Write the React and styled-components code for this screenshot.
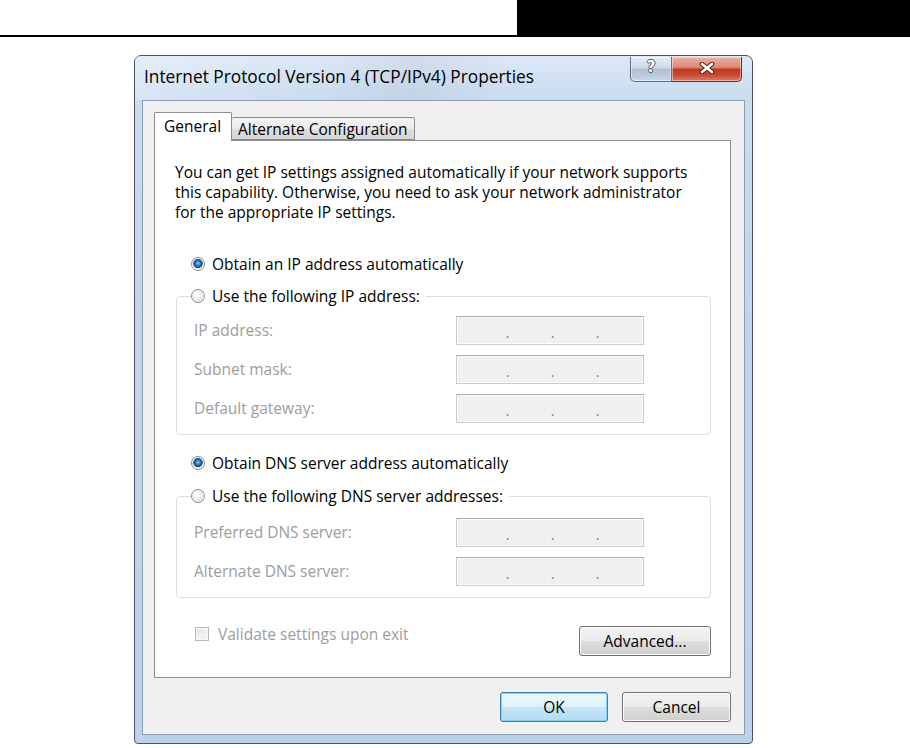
import React from "react";
import styled, { createGlobalStyle } from "styled-components";

const Global = createGlobalStyle`
  html, body { margin: 0; padding: 0; background: #fff; }
  body { font-family: "Open Sans", "Noto Sans", sans-serif; color: #000; }
  * { box-sizing: border-box; }
`;

const Page = styled.div`
  width: 910px;
  height: 748px;
  overflow: hidden;
  background: #fff;
`;

const Header = styled.div`
  display: flex;
  height: 37px;
`;

const HeaderLeft = styled.div`
  flex: 0 0 517px;
  border-bottom: 2px solid #000;
`;

const HeaderRight = styled.div`
  flex: 1;
  background: #000;
`;

const Window = styled.div`
  margin: 18px 0 0 134px;
  width: 619px;
  border: 1px solid #4a5260;
  border-radius: 7px 7px 4px 4px;
  background: linear-gradient(180deg, #dce8f6 0%, #cadcf0 6%, #c0d4ec 40%, #bcd2ec 100%);
  display: flex;
  flex-direction: column;
`;

const TitleBar = styled.div`
  height: 44px;
  display: flex;
  align-items: flex-start;
  padding: 0 10px 0 9px;
  background: linear-gradient(100deg, rgba(255,255,255,0.25) 0%, rgba(255,255,255,0) 30%, rgba(160,170,185,0.18) 45%, rgba(255,255,255,0) 60%);
`;

const TitleText = styled.div`
  flex: 1;
  margin-top: 10px;
  font-size: 17.3px;
  line-height: 22px;
  color: #000;
  white-space: nowrap;
`;

const CaptionButtons = styled.div`
  display: flex;
  margin-top: 1px;
`;

const CaptionButton = styled.div`
  width: ${(p) => p.$w}px;
  height: 25px;
  display: flex;
  align-items: center;
  justify-content: center;
  border: 1px solid ${(p) => (p.$close ? "#6b2e25" : "#5f6d80")};
  border-top: none;
  border-radius: ${(p) => (p.$close ? "0 0 5px 0" : "0 0 0 5px")};
  border-left-width: ${(p) => (p.$close ? 0 : 1)}px;
  background: ${(p) =>
    p.$close
      ? "linear-gradient(180deg, #eab0a4 0%, #dc8a77 42%, #c3381d 52%, #c84a32 75%, #dd7d66 100%)"
      : "linear-gradient(180deg, #e6edf6 0%, #cdd9e7 45%, #b0c0d4 52%, #bccbdd 80%, #cbdaeb 100%)"};
  box-shadow: inset 0 0 0 1px rgba(255,255,255,0.45);
  padding-bottom: 3px;
`;

const HelpGlyph = styled.span`
  font-family: "DejaVu Sans", sans-serif;
  font-weight: bold;
  font-size: 15px;
  line-height: 15px;
  color: #fff;
  text-shadow: -1px 0 #4a5868, 1px 0 #4a5868, 0 -1px #4a5868, 0 1px #4a5868;
`;

const Client = styled.div`
  margin: 0 7px 8px 7px;
  border: 1px solid #8e9cae;
  background: #f0f0f0;
  padding: 11px 13px 12px 11px;
  display: flex;
  flex-direction: column;
`;

const TabRow = styled.div`
  display: flex;
  align-items: flex-end;
  height: 28px;
  position: relative;
  z-index: 1;
`;

const Tab = styled.div`
  height: ${(p) => (p.$active ? 29 : 23)}px;
  margin-bottom: ${(p) => (p.$active ? -1 : 0)}px;
  padding: ${(p) => (p.$active ? "3px 10px 0 9px" : "1px 6px 0 6px")};
  font-size: 15.5px;
  line-height: 20px;
  border: 1px solid #898c95;
  border-bottom: ${(p) => (p.$active ? "none" : "1px solid #898c95")};
  border-left-width: ${(p) => (p.$active ? 1 : 0)}px;
  border-radius: 2px 2px 0 0;
  background: ${(p) =>
    p.$active ? "#fff" : "linear-gradient(180deg, #f3f3f3 0%, #ebebeb 50%, #dedede 51%, #d6d6d6 100%)"};
  white-space: nowrap;
`;

const Panel = styled.div`
  background: #fff;
  border: 1px solid #898c95;
  padding: 21px 19px 21px 20px;
  display: flex;
  flex-direction: column;
`;

const Intro = styled.p`
  margin: 0;
  font-size: 15.5px;
  line-height: 20px;
  white-space: nowrap;
`;

const RadioRow = styled.label`
  display: flex;
  align-items: center;
  gap: 7px;
  height: 20px;
  margin: ${(p) => p.$m || "0"};
  padding-left: 16px;
  font-size: 15.5px;
  white-space: nowrap;
`;

const RadioDot = styled.span`
  flex: 0 0 14px;
  width: 14px;
  height: 14px;
  border-radius: 50%;
  border: 1px solid #8f8f8f;
  background: ${(p) =>
    p.$checked
      ? "radial-gradient(circle at 50% 45%, #8fd0f6 0%, #2a8ad4 22%, #1a5aa0 40%, #2b3f55 50%, #e2e2e2 56%, #f6f6f6 100%)"
      : "radial-gradient(circle at 40% 35%, #ffffff 0%, #f0f0f0 40%, #d4d4d4 100%)"};
  box-shadow: inset 0 0 0 1px #f4f4f4;
`;

const Group = styled.fieldset`
  margin: ${(p) => p.$m};
  margin-left: 1px;
  width: 535px;
  border: 1px solid #d5dfe5;
  border-radius: 4px;
  padding: ${(p) => p.$pt}px 0 ${(p) => p.$pb}px 14px;
  min-width: 0;
`;

const Legend = styled.legend`
  padding: 0 6px 0 0;
  margin: 0;
  display: flex;
  align-items: center;
  gap: 7px;
  height: 20px;
  font-size: 15.5px;
  white-space: nowrap;
`;

const FieldGrid = styled.div`
  display: grid;
  grid-template-columns: 262px 188px;
  row-gap: 10px;
  padding-left: 3px;
`;

const FieldLabel = styled.div`
  font-size: 15.5px;
  line-height: 29px;
  color: #9d9d9d;
  white-space: nowrap;
`;

const IpBox = styled.div`
  height: 29px;
  border: 1px solid #c9cbcd;
  border-top-color: #a9abae;
  background: #f0f0f0;
  box-shadow: inset 0 0 0 1px #fbfbfb;
  display: flex;
  padding-left: 28px;
`;

const IpDot = styled.span`
  width: 45px;
  text-align: center;
  font-size: 14px;
  line-height: 31px;
  color: #7d7591;
`;

const BottomRow = styled.div`
  display: flex;
  justify-content: space-between;
  align-items: flex-start;
  margin-top: 28px;
  width: 536px;
`;

const CheckRow = styled.label`
  display: flex;
  align-items: center;
  gap: 9px;
  margin-left: 20px;
  font-size: 15.5px;
  line-height: 16px;
  color: #9d9d9d;
  white-space: nowrap;
`;

const CheckBox = styled.span`
  width: 14px;
  height: 14px;
  border: 1px solid #b8b8b8;
  background: linear-gradient(135deg, #e6e6e6 0%, #f7f7f7 100%);
  box-shadow: inset 0 0 0 1px #fafafa;
`;

const Button = styled.div`
  width: ${(p) => p.$w}px;
  height: 30px;
  display: flex;
  align-items: center;
  justify-content: center;
  font-size: 15.5px;
  border-radius: 3px;
  border: 1px solid ${(p) => (p.$default ? "#3c7fb1" : "#707070")};
  background: ${(p) =>
    p.$default
      ? "linear-gradient(180deg, #ecf7fd 0%, #dff2fc 48%, #c4e5f8 52%, #b2dcf5 100%)"
      : "linear-gradient(180deg, #f3f3f3 0%, #ebebeb 48%, #dddddd 52%, #cfcfcf 100%)"};
  box-shadow: inset 0 0 0 1px ${(p) => (p.$default ? "#7fd0f5" : "#fcfcfc")};
`;

const DialogButtons = styled.div`
  display: flex;
  justify-content: flex-end;
  gap: 14px;
  margin-top: 14px;
`;

function CloseGlyph() {
  return (
    <svg width="16" height="12" viewBox="0 0 16 12">
      <path d="M3 2 L13 10 M13 2 L3 10" stroke="#5a1e14" strokeWidth="4.6" strokeLinecap="round" fill="none" />
      <path d="M3 2 L13 10 M13 2 L3 10" stroke="#fff" strokeWidth="2.6" strokeLinecap="round" fill="none" />
    </svg>
  );
}

function IpField({ label }) {
  return (
    <>
      <FieldLabel>{label}</FieldLabel>
      <IpBox>
        <IpDot>.</IpDot>
        <IpDot>.</IpDot>
        <IpDot>.</IpDot>
      </IpBox>
    </>
  );
}

export default function App() {
  return (
    <Page>
      <Global />
      <Header>
        <HeaderLeft />
        <HeaderRight />
      </Header>
      <Window>
        <TitleBar>
          <TitleText>Internet Protocol Version 4 (TCP/IPv4) Properties</TitleText>
          <CaptionButtons>
            <CaptionButton $w={42}>
              <HelpGlyph>?</HelpGlyph>
            </CaptionButton>
            <CaptionButton $w={70} $close>
              <CloseGlyph />
            </CaptionButton>
          </CaptionButtons>
        </TitleBar>
        <Client>
          <TabRow>
            <Tab $active>General</Tab>
            <Tab>Alternate Configuration</Tab>
          </TabRow>
          <Panel>
            <Intro>
              You can get IP settings assigned automatically if your network supports
              <br />
              this capability. Otherwise, you need to ask your network administrator
              <br />
              for the appropriate IP settings.
            </Intro>
            <RadioRow $m="32px 0 0 0">
              <RadioDot $checked />
              Obtain an IP address automatically
            </RadioRow>
            <Group $m="12px 0 0 0" $pt={10} $pb={11}>
              <Legend>
                <RadioDot />
                Use the following IP address:
              </Legend>
              <FieldGrid>
                <IpField label="IP address:" />
                <IpField label="Subnet mask:" />
                <IpField label="Default gateway:" />
              </FieldGrid>
            </Group>
            <RadioRow $m="18px 0 0 0">
              <RadioDot $checked />
              Obtain DNS server address automatically
            </RadioRow>
            <Group $m="13px 0 0 0" $pt={12} $pb={11}>
              <Legend>
                <RadioDot />
                Use the following DNS server addresses:
              </Legend>
              <FieldGrid>
                <IpField label="Preferred DNS server:" />
                <IpField label="Alternate DNS server:" />
              </FieldGrid>
            </Group>
            <BottomRow>
              <CheckRow>
                <CheckBox />
                Validate settings upon exit
              </CheckRow>
              <Button $w={132}>Advanced...</Button>
            </BottomRow>
          </Panel>
          <DialogButtons>
            <Button $w={108} $default>OK</Button>
            <Button $w={109}>Cancel</Button>
          </DialogButtons>
        </Client>
      </Window>
    </Page>
  );
}
